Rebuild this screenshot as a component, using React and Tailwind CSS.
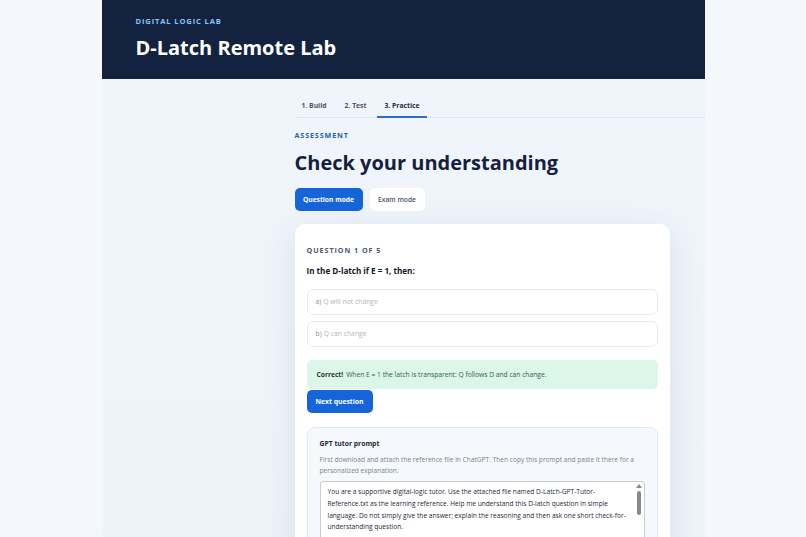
import React from "react";

export default function App() {
  return (
    <div className="min-h-screen bg-[#f4f7fc]" style={{ fontFamily: '"Open Sans", "Noto Sans", sans-serif' }}>
      <div className="mx-auto w-[603px]">
        <header className="h-[79px] bg-[#13233f] pl-[34px] pt-[16px]">
          <div className="text-[7.5px] font-bold tracking-[0.12em] text-[#8cc4f5] leading-[10px]">DIGITAL LOGIC LAB</div>
          <h1 className="mt-[8px] text-[20px] font-bold leading-[28px] text-white">D-Latch Remote Lab</h1>
        </header>
        <main className="min-h-[458px] bg-gradient-to-b from-[#f0f5fb] to-[#eef3f9] pl-[193px] pt-[20px] pb-10">
          <nav className="flex gap-[4px] border-b border-[#e1e7ef] text-[6.8px] font-bold">
            <div className="px-[7px] pb-[6px] pt-[2px] text-[#4b5563]">1. Build</div>
            <div className="px-[7px] pb-[6px] pt-[2px] text-[#4b5563]">2. Test</div>
            <div className="-mb-px border-b-2 border-[#2f6fc0] px-[7px] pb-[5px] pt-[2px] text-[#1e2a44]">3. Practice</div>
          </nav>
          <div className="mt-[12px] text-[7.2px] font-bold tracking-[0.12em] text-[#1f5fbf] leading-[11px]">ASSESSMENT</div>
          <h2 className="mt-[7px] text-[20px] font-bold leading-[30px] text-[#14213d]">Check your understanding</h2>
          <div className="mt-[10px] flex gap-[7px]">
            <button className="h-[23px] w-[68px] rounded-[5px] bg-[#1565d8] text-[6.7px] font-bold text-white">Question mode</button>
            <button className="h-[23px] w-[55px] rounded-[5px] bg-white text-[6.7px] font-semibold text-[#4b5563]">Exam mode</button>
          </div>
          <section className="mt-[13px] w-[375px] rounded-[10px] bg-white px-[12px] pt-[21px] pb-[20px] shadow-[0_8px_34px_rgba(30,60,110,0.11)]">
            <div className="text-[7.2px] font-bold tracking-[0.13em] text-[#4a5870] leading-[11px]">QUESTION 1 OF 5</div>
            <div className="mt-[9px] text-[8.1px] font-bold text-[#111827] leading-[12px]">In the D-latch if E = 1, then:</div>
            <div className="mt-[12px] flex flex-col gap-[6px]">
              <div className="flex h-[26px] items-center rounded-[6px] border border-[#e6e9ee] px-[8px] text-[6.8px] text-[#b0b7c2]">
                <span className="mr-[2px] text-[#8b93a0]">a)</span> Q will not change
              </div>
              <div className="flex h-[26px] items-center rounded-[6px] border border-[#e6e9ee] px-[8px] text-[6.8px] text-[#b0b7c2]">
                <span className="mr-[2px] text-[#8b93a0]">b)</span> Q can change
              </div>
            </div>
            <div className="mt-[13px] flex h-[29px] items-center rounded-[5px] bg-[#dcf7ea] px-[10px] text-[6.7px] text-[#2f5f4a]">
              <span className="mr-[3px] font-bold text-[#183d2c]">Correct!</span> When E = 1 the latch is transparent: Q follows D and can change.
            </div>
            <button className="mt-px block h-[23px] w-[66px] rounded-[5px] bg-[#1565d8] text-[6.8px] font-bold text-white">Next question</button>
            <div className="mt-[14px] rounded-[8px] border border-[#e1e9f3] bg-[#f5f9fe] px-[12px] pt-[11px] pb-[12px]">
              <div className="text-[6.8px] font-bold text-[#1f2937] leading-[10px]">GPT tutor prompt</div>
              <p className="mt-[5px] text-[6.6px] leading-[11px] text-[#7a828e]">
                First download and attach the reference file in ChatGPT. Then copy this prompt and paste it there for a personalized explanation.
              </p>
              <div className="relative mt-[5px] h-[90px] rounded-[3px] border border-[#c9cdd3] bg-white pl-[7px] pr-[15px] pt-[4px]">
                <p className="text-[6.6px] leading-[11.7px] text-[#1f2937]">
                  You are a supportive digital-logic tutor. Use the attached file named D-Latch-GPT-Tutor-Reference.txt as the learning reference. Help me understand this D-latch question in simple language. Do not simply give the answer; explain the reasoning and then ask one short check-for-understanding question.
                </p>
                <div className="absolute right-[2px] top-[2px] flex h-[84px] w-[6px] flex-col items-center">
                  <svg width="6" height="4" viewBox="0 0 6 4"><path d="M0 4 L3 0 L6 4 Z" fill="#8a8a8a" /></svg>
                  <div className="mt-[3px] h-[24px] w-[4px] rounded-full bg-[#8a8a8a]"></div>
                  <div className="flex-1"></div>
                  <svg width="6" height="4" viewBox="0 0 6 4"><path d="M0 0 L3 4 L6 0 Z" fill="#8a8a8a" /></svg>
                </div>
              </div>
            </div>
          </section>
        </main>
      </div>
    </div>
  );
}
